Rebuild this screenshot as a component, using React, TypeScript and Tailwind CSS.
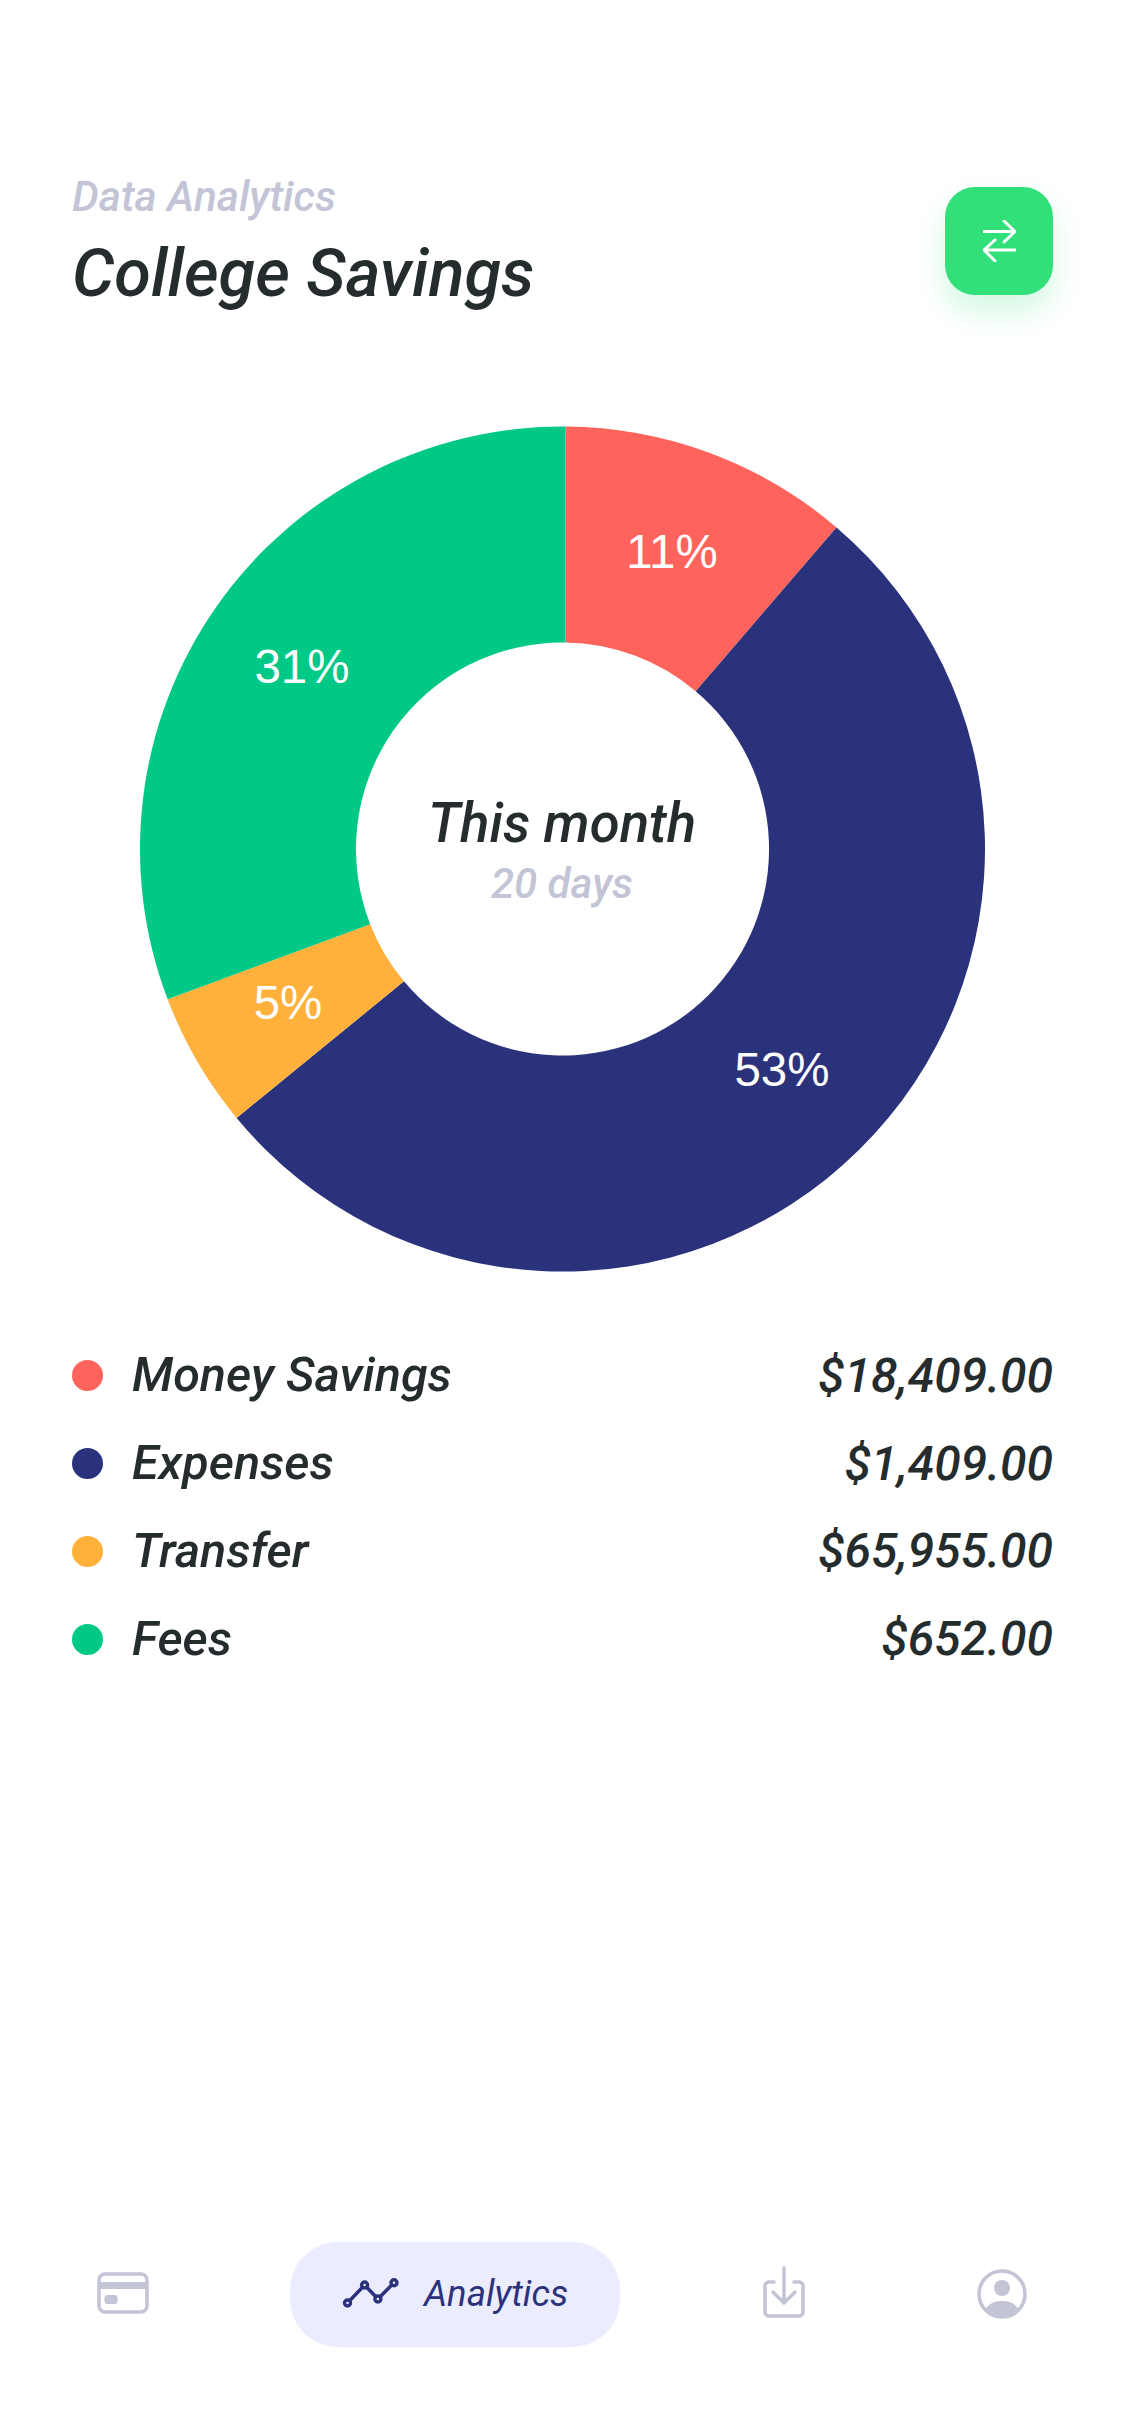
import React from "react";

const cx = 562.5, cy = 849, R = 422.5, r = 206.5;
type Pt = [number, number];
function project(p: Pt, rad: number): Pt {
  const dx = p[0] - cx, dy = p[1] - cy;
  const len = Math.hypot(dx, dy);
  return [+(cx + (dx / len) * rad).toFixed(2), +(cy + (dy / len) * rad).toFixed(2)];
}
type Edge = { o: Pt; i: Pt };
function edge(o: Pt, i: Pt): Edge {
  return { o: project(o, R), i: project(i, r) };
}
const A = edge([565.5, 426.6], [565.5, 642.6]);
const B = edge([835.7, 528.3], [696.7, 690]);
const C = edge([237.3, 1117.3], [402.3, 982.7]);
const D = edge([168.3, 999], [368.3, 925]);
function wedge(s: Edge, e: Edge, large: 0 | 1) {
  return `M ${s.o[0]} ${s.o[1]} A ${R} ${R} 0 ${large} 1 ${e.o[0]} ${e.o[1]} L ${e.i[0]} ${e.i[1]} A ${r} ${r} 0 ${large} 0 ${s.i[0]} ${s.i[1]} Z`;
}
const wedges = [
  { d: wedge(A, B, 0), c: "#FF645C" },
  { d: wedge(B, C, 1), c: "#2B327C" },
  { d: wedge(C, D, 0), c: "#FFB13B" },
  { d: wedge(D, A, 0), c: "#00C887" },
];
const labels = [
  { t: "11%", x: 672, y: 568 },
  { t: "53%", x: 782, y: 1086 },
  { t: "5%", x: 288, y: 1019 },
  { t: "31%", x: 302, y: 683 },
];
const rows = [
  { n: "Money Savings", v: "$18,409.00", c: "bg-[#FF645C]", h: "h-[89px]" },
  { n: "Expenses", v: "$1,409.00", c: "bg-[#2B327C]", h: "h-[87px]" },
  { n: "Transfer", v: "$65,955.00", c: "bg-[#FFB13B]", h: "h-[88px]" },
  { n: "Fees", v: "$652.00", c: "bg-[#00C887]", h: "h-[88px]" },
];

export default function App() {
  return (
    <div className="w-[1125px] h-[2436px] bg-white flex flex-col font-['Roboto',sans-serif] italic overflow-hidden">
      <header className="flex items-start justify-between pl-[72px] pr-[72px] pt-[170px] h-[426px]">
        <div>
          <div className="text-[42.3px] leading-[54px] font-medium text-[#C3C4D6]">Data Analytics</div>
          <div className="text-[66.7px] leading-[78px] mt-[10px] font-medium text-[#252C2E]">College Savings</div>
        </div>
        <button className="mt-[17px] w-[108px] h-[108px] rounded-[30px] bg-[#32E07A] shadow-[0_16px_30px_rgba(50,224,122,0.22)] flex items-center justify-center">
          <svg width="33" height="42" viewBox="0 0 33 42" fill="none" stroke="white" strokeWidth="3" strokeLinecap="round" strokeLinejoin="round">
            <path d="M1 11.5H32M21 1L32 11.5L21 22" />
            <path d="M32 30H1M12 20L1 30L12 41" />
          </svg>
        </button>
      </header>

      <div className="relative h-[900px] w-[1125px] shrink-0">
        <svg className="absolute left-0 top-[-426px]" width="1125" height="1326" viewBox="0 0 1125 1326">
          {wedges.map((w) => (
            <path key={w.c} d={w.d} fill={w.c} />
          ))}
          {labels.map((l) => (
            <text key={l.t} x={l.x} y={l.y} textAnchor="middle" fill="white" fontSize="47.5" fontFamily="Liberation Sans, Arial, sans-serif" fontStyle="normal">
              {l.t}
            </text>
          ))}
        </svg>
        <div className="absolute left-[362px] top-[365px] w-[400px] text-center">
          <div className="text-[54.5px] leading-[64px] font-medium text-[#252C2E]">This month</div>
          <div className="text-[42px] leading-[46px] mt-[6px] font-medium text-[#C3C4D6]">20 days</div>
        </div>
      </div>

      <ul className="flex flex-col px-[72px] mt-[5px]">
        {rows.map((row) => (
          <li key={row.n} className={`flex items-center ${row.h}`}>
            <span className={`w-[31px] h-[31px] rounded-full ${row.c}`} />
            <span className="ml-[29px] text-[48.5px] font-medium text-[#252C2E]">{row.n}</span>
            <span className="ml-auto text-[48px] font-medium text-[#252C2E]">{row.v}</span>
          </li>
        ))}
      </ul>

      <nav className="mt-auto mb-[89px] flex items-center pl-[97px]">
        <svg className="mb-[3px]" width="52" height="42" viewBox="0 0 52 42" fill="none">
          <rect x="2" y="2" width="48" height="38" rx="6" stroke="#C3C4D6" strokeWidth="3.5" />
          <rect x="2" y="10" width="48" height="7" fill="#C3C4D6" />
          <rect x="7.5" y="23" width="13" height="9" rx="3" fill="#C3C4D6" />
        </svg>
        <div className="ml-[141px] w-[330px] h-[105px] rounded-[48px] bg-[#EBECFD] flex items-center pl-[52px]">
          <svg className="mb-[3px]" width="58" height="30" viewBox="0 0 58 30" fill="none">
            <path d="M5.5 25L22.6 7L35.9 21L52 4.7" stroke="#2B327C" strokeWidth="3.5" />
            <circle cx="5.5" cy="25" r="3" fill="#EBECFD" stroke="#2B327C" strokeWidth="3.4" />
            <circle cx="22.6" cy="7" r="3" fill="#EBECFD" stroke="#2B327C" strokeWidth="3.4" />
            <circle cx="35.9" cy="21" r="3" fill="#EBECFD" stroke="#2B327C" strokeWidth="3.4" />
            <circle cx="52" cy="4.7" r="3" fill="#EBECFD" stroke="#2B327C" strokeWidth="3.4" />
          </svg>
          <span className="ml-[24px] text-[36.5px] font-normal text-[#2B327C]">Analytics</span>
        </div>
        <svg className="ml-[143px] mb-[5px]" width="42" height="52" viewBox="0 0 42 52" fill="none" stroke="#C3C4D6" strokeWidth="3.5" strokeLinecap="round" strokeLinejoin="round">
          <path d="M11 16H6a4 4 0 0 0-4 4v26a4 4 0 0 0 4 4h30a4 4 0 0 0 4-4V20a4 4 0 0 0-4-4h-5" />
          <path d="M21 2V37M10 26L21 37L32 26" />
        </svg>
        <svg className="ml-[172px] mb-[2px]" width="50" height="50" viewBox="0 0 50 50" fill="none">
          <circle cx="25" cy="25" r="23" stroke="#C3C4D6" strokeWidth="3.5" />
          <circle cx="25" cy="19" r="8" fill="#C3C4D6" />
          <path d="M8 41C12 34 18 32 25 32C32 32 38 34 42 41C38 46 32 48 25 48C18 48 12 46 8 41Z" fill="#C3C4D6" />
        </svg>
      </nav>
    </div>
  );
}
